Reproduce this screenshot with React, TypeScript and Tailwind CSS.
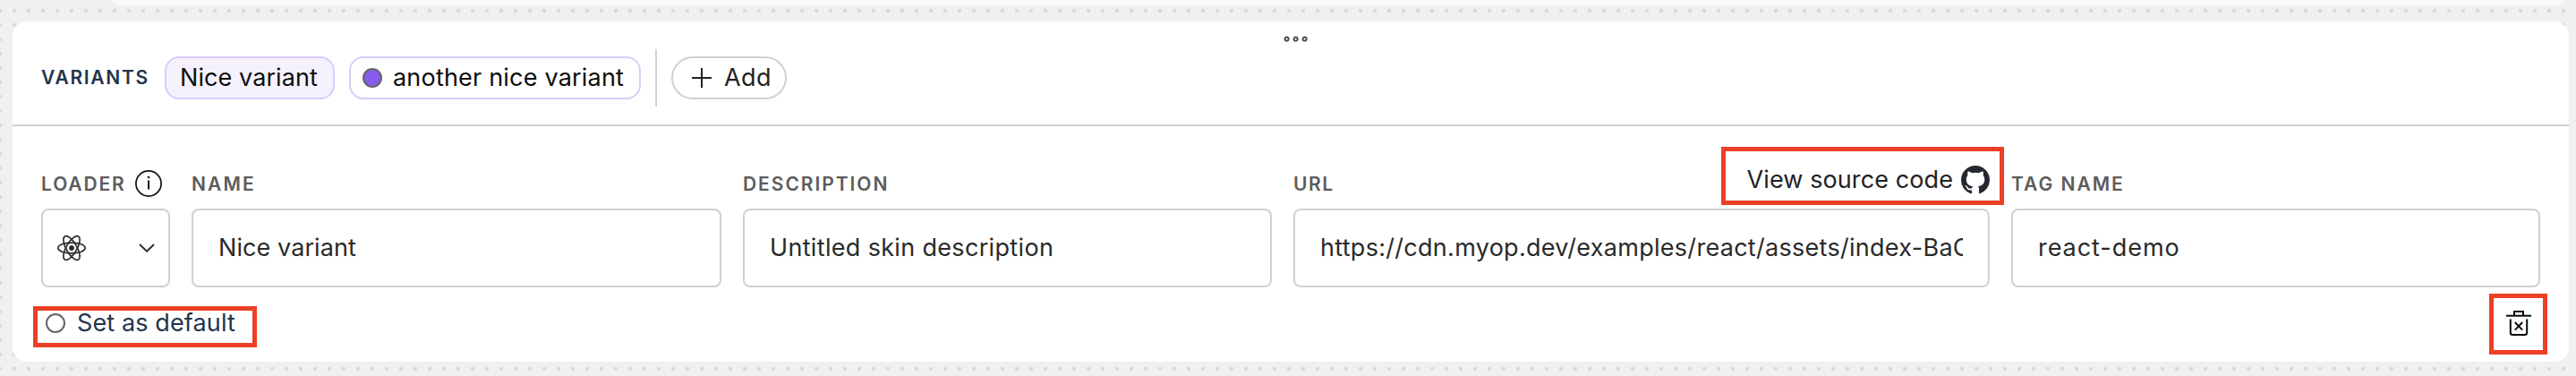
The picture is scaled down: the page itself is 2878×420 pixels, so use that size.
import type { ReactNode } from "react";

function Label({ children, className }: { children: ReactNode; className: string }) {
  return (
    <span className={`whitespace-nowrap text-[21px] leading-[28px] font-semibold ${className}`}>
      {children}
    </span>
  );
}

function InfoIcon() {
  return (
    <svg className="-mt-[2px] ml-[10px] size-[30px] shrink-0" viewBox="0 0 30 30" fill="none">
      <circle cx="15" cy="15" r="14.1" stroke="#111" strokeWidth="1.7" />
      <path d="M15 11.5V21.5" stroke="#111" strokeWidth="2" />
      <circle cx="15" cy="8" r="1.3" fill="#111" />
    </svg>
  );
}

function ReactIcon() {
  return (
    <svg className="size-[32px]" viewBox="-16 -16 32 32" fill="none" stroke="#2b2b2b" strokeWidth="1.7">
      <ellipse rx="15.1" ry="5.9" />
      <ellipse rx="15.1" ry="5.9" transform="rotate(60)" />
      <ellipse rx="15.1" ry="5.9" transform="rotate(120)" />
      <circle r="2.9" fill="#2b2b2b" stroke="none" />
    </svg>
  );
}

function GithubIcon() {
  return (
    <svg className="size-[32px] shrink-0" viewBox="0 0 16 16" fill="#24292f">
      <path d="M8 0C3.58 0 0 3.58 0 8c0 3.54 2.29 6.53 5.47 7.59.4.07.55-.17.55-.38 0-.19-.01-.82-.01-1.49-2.01.37-2.53-.49-2.69-.94-.09-.23-.48-.94-.82-1.13-.28-.15-.68-.52-.01-.53.63-.01 1.08.58 1.23.82.72 1.21 1.87.87 2.33.66.07-.52.28-.87.51-1.07-1.78-.2-3.64-.89-3.64-3.95 0-.87.31-1.59.82-2.15-.08-.2-.36-1.02.08-2.12 0 0 .67-.21 2.2.82.64-.18 1.32-.27 2-.27s1.36.09 2 .27c1.53-1.04 2.2-.82 2.2-.82.44 1.1.16 1.92.08 2.12.51.56.82 1.27.82 2.15 0 3.07-1.87 3.75-3.65 3.95.29.25.54.73.54 1.48 0 1.07-.01 1.93-.01 2.2 0 .21.15.46.55.38A8.01 8.01 0 0 0 16 8c0-4.42-3.58-8-8-8z" />
    </svg>
  );
}

function TrashIcon() {
  return (
    <svg className="size-[28px]" viewBox="0 0 28 28" fill="none" stroke="#0a0a0a" strokeWidth="2">
      <path d="M0 5.7H28" />
      <path d="M9 5.5V1H19V5.5" />
      <path d="M4.8 9.5V24.5Q4.8 27 7.3 27H20.7Q23.2 27 23.2 24.5V9.5" />
      <path d="M9.8 13L18.2 21.6M18.2 13L9.8 21.6" />
    </svg>
  );
}

function Field({ label, className, children, textClassName, action }: {
  label: ReactNode;
  className: string;
  children: ReactNode;
  textClassName: string;
  action?: ReactNode;
}) {
  return (
    <div className={`shrink-0 ${className}`}>
      <div className="flex h-[92px] items-start justify-between pt-[51px]">
        {label}
        {action}
      </div>
      <div className="flex h-[88px] items-center rounded-lg border-2 border-[#d0d0d7] px-7 text-[#2a2a2a]">
        <div className={`w-full overflow-hidden whitespace-nowrap ${textClassName}`}>{children}</div>
      </div>
    </div>
  );
}

export default function App() {
  return (
    <div className="h-[420px] w-[2878px] overflow-hidden bg-[#f0f0f0] bg-[radial-gradient(circle,#d9d9d9_1.9px,transparent_2.5px)] bg-[length:16px_16px] bg-[position:-8px_4px] font-['Inter','Liberation_Sans',sans-serif] text-[27px] leading-[36px]">
      <div className="mr-2 ml-[120px] h-[6px] overflow-hidden">
        <div className="-mt-[26px] h-8 rounded-b-2xl bg-[#f9f9f9]" />
      </div>
      <main className="relative mt-[18px] mr-2 ml-[14px] h-[380px] rounded-2xl bg-white">
        <svg className="absolute top-4 left-[1420px] h-[8px] w-[27px]" viewBox="0 0 27 8" fill="none" stroke="#4a4a4a" strokeWidth="1.9">
          <circle cx="3.6" cy="3.6" r="2.1" />
          <circle cx="13.6" cy="3.6" r="2.1" />
          <circle cx="23.6" cy="3.6" r="2.1" />
        </svg>

        <header className="flex h-[117px] items-center border-b-2 border-[#d0d0d7] pt-[11px] pl-8">
          <Label className="w-[138px] tracking-[1.7px] text-[#24344a]">VARIANTS</Label>
          <button className="flex h-12 w-[190px] items-center rounded-2xl border-2 border-[#d9cbfb] bg-[#f5f2fe] pb-[1px] pl-[15px] whitespace-nowrap tracking-[0.08px] text-[#0d0d0d]">
            Nice variant
          </button>
          <button className="ml-4 flex h-12 w-[326px] items-center gap-3 rounded-2xl border-2 border-[#d9cbfb] pl-[13px] whitespace-nowrap tracking-[0.2px] text-[#0d0d0d]">
            <span className="size-[22px] shrink-0 rounded-full border-2 border-[#656565] bg-[#875bec]" />
            <span className="pb-[1px]">another nice variant</span>
          </button>
          <span className="ml-4 h-16 w-[2px] bg-[#d0d0d7]" />
          <button className="ml-4 flex h-12 w-[129px] items-center gap-[14px] rounded-full border-2 border-[#d0d0d7] pl-[21px] tracking-[0.4px] text-[#222]">
            <svg className="size-[22px] shrink-0" viewBox="0 0 22 22" stroke="#222" strokeWidth="2">
              <path d="M11 0V22M0 11H22" />
            </svg>
            <span className="pb-[1px]">Add</span>
          </button>
        </header>

        <section className="flex gap-6 pl-8">
          <div className="w-[144px] shrink-0">
            <div className="flex h-[92px] items-start pt-[51px]">
              <Label className="tracking-[1.85px] text-[#5c5c5c]">LOADER</Label>
              <InfoIcon />
            </div>
            <button className="flex h-[88px] w-full items-center justify-between rounded-lg border-2 border-[#d0d0d7] pr-[15px] pl-4">
              <ReactIcon />
              <svg className="h-[10px] w-[18px]" viewBox="0 0 18 10" fill="none" stroke="#2b2b2b" strokeWidth="2">
                <path d="M1 1L9 8.6L17 1" />
              </svg>
            </button>
          </div>
          <Field
            className="w-[592px]"
            label={<Label className="tracking-[2.1px] text-[#5c5c5c]">NAME</Label>}
            textClassName="tracking-[0.08px]"
          >
            Nice variant
          </Field>
          <Field
            className="w-[591px]"
            label={<Label className="tracking-[1.95px] text-[#5c5c5c]">DESCRIPTION</Label>}
            textClassName="tracking-[0.33px]"
          >
            Untitled skin description
          </Field>
          <Field
            className="w-[778px]"
            label={<Label className="tracking-[1.5px] text-[#5c5c5c]">URL</Label>}
            action={
              <a className="-mt-[7px] flex h-8 items-center gap-[9px] whitespace-nowrap tracking-[0.1px] text-[#222]">
                View source code
                <GithubIcon />
              </a>
            }
            textClassName="tracking-[0.29px]"
          >
            https://cdn.myop.dev/examples/react/assets/index-BaC
          </Field>
          <Field
            className="w-[591px]"
            label={<Label className="tracking-[2px] text-[#5c5c5c]">TAG NAME</Label>}
            textClassName="tracking-[0.95px]"
          >
            react-demo
          </Field>
        </section>

        <footer className="flex h-[83px] items-start justify-between pt-[26px] pr-[42px] pl-[37px]">
          <label className="flex h-7 items-center gap-[13px] whitespace-nowrap tracking-[0.12px] text-[#24344a]">
            <span className="size-[22px] rounded-full border-2 border-[#656565]" />
            <span className="pb-[1px]">Set as default</span>
          </label>
          <TrashIcon />
        </footer>

        <div className="absolute top-[140px] left-[1909px] h-[65px] w-[316px] border-5 border-[#ec4026]" />
        <div className="absolute top-[318px] left-[23px] h-[46px] w-[250px] border-5 border-[#ec4026]" />
        <div className="absolute top-[304px] left-[2767px] h-[68px] w-[65px] border-5 border-[#ec4026]" />
      </main>
    </div>
  );
}
